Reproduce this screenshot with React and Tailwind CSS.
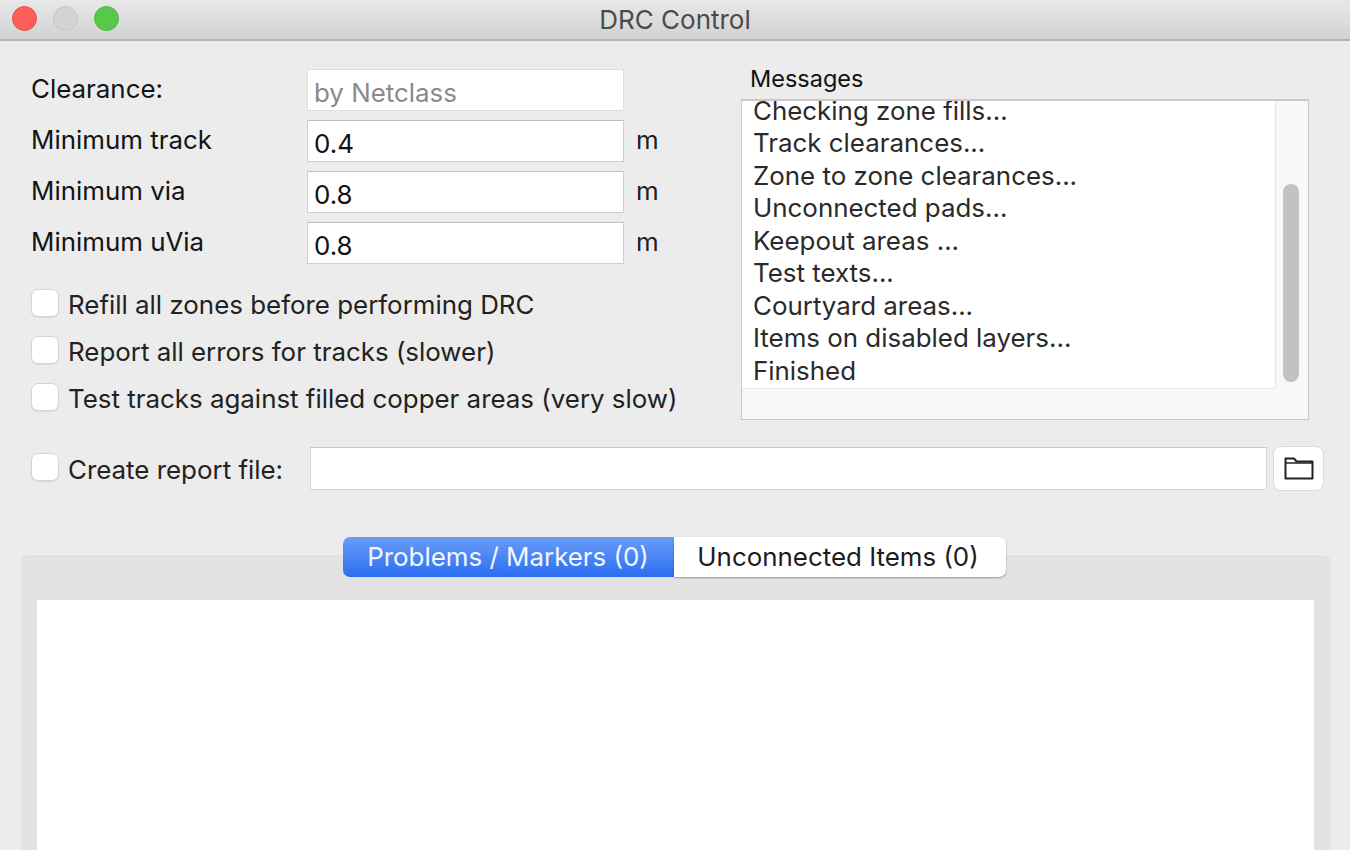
const font = { fontFamily: 'Inter, "Liberation Sans", sans-serif' };

function Field({ value, muted, unit }) {
  return (
    <div className="flex items-center h-[42px]">
      <div className={`w-[317px] h-[42px] bg-white border border-[#cfcfcf] border-t-[#bdbdbd] pl-[6px] pt-[6px] flex items-center text-[25.9px] ${muted ? "text-[#8a8a8a] border-[#dedede] border-t-[#dedede]" : "text-[#111]"}`}>
        {value}
      </div>
      {unit && <span className="ml-[12px] pb-[2px] text-[25.9px] text-[#222]">m</span>}
    </div>
  );
}

function Label({ children }) {
  return <div className="h-[42px] flex items-center pb-[2px] text-[25.9px] text-[#141414]">{children}</div>;
}

function Check({ children, className = "", textClass = "pt-[2px]" }) {
  return (
    <div className={`flex items-center h-[30px] ${className}`}>
      <div className="w-[28px] h-[28px] mb-[2px] rounded-[7px] bg-white border border-[#d4d4d4] shadow-[0_1px_1px_rgba(0,0,0,0.08)] shrink-0" />
      <span className={`ml-[9px] text-[25.9px] text-[#222] whitespace-nowrap ${textClass}`}>{children}</span>
    </div>
  );
}

const messages = [
  "Checking zone fills...",
  "Track clearances...",
  "Zone to zone clearances...",
  "Unconnected pads...",
  "Keepout areas ...",
  "Test texts...",
  "Courtyard areas...",
  "Items on disabled layers...",
  "Finished",
];

export default function App() {
  return (
    <div style={font} className="w-[1350px] h-[850px] overflow-hidden bg-[#ececec] flex flex-col">
      <header className="relative h-[41px] shrink-0 flex items-center justify-center bg-gradient-to-b from-[#e8e8e8] to-[#d2d2d2] border-b-2 border-[#b4b4b4]">
        <div className="absolute left-[12px] top-[6px] flex gap-[16px]">
          <div className="w-[25px] h-[25px] rounded-full bg-[#fc5f57] border border-[#e2504a]" />
          <div className="w-[25px] h-[25px] rounded-full bg-[#d3d3d3] border border-[#c6c6c6]" />
          <div className="w-[25px] h-[25px] rounded-full bg-[#57c84a] border border-[#4cb941]" />
        </div>
        <span className="text-[26px] text-[#4a4a4a]">DRC Control</span>
      </header>

      <div className="flex pl-[31px] pt-[28px] h-[368px] shrink-0">
        <div className="w-[710px] shrink-0">
          <div className="flex">
            <div className="w-[276px] flex flex-col gap-[9px]">
              <Label>Clearance:</Label>
              <Label>Minimum track</Label>
              <Label>Minimum via</Label>
              <Label>Minimum uVia</Label>
            </div>
            <div className="flex flex-col gap-[9px]">
              <Field value="by Netclass" muted />
              <Field value="0.4" unit />
              <Field value="0.8" unit />
              <Field value="0.8" unit />
            </div>
          </div>
          <div className="mt-[25px] flex flex-col gap-[17px]">
            <Check>Refill all zones before performing DRC</Check>
            <Check>Report all errors for tracks (slower)</Check>
            <Check>Test tracks against filled copper areas (very slow)</Check>
          </div>
        </div>
        <div className="-mt-[4px]">
          <div className="ml-[9px] h-[28px] flex items-center text-[23.5px] text-[#111]">Messages</div>
          <div className="mt-[6px] w-[568px] h-[321px] bg-[#f8f8f8] border border-[#c9c9c9] border-t-2 flex">
            <div className="w-[534px] h-[288px] bg-white border-r border-b border-[#e6e6e6] overflow-hidden pl-[11px] shrink-0">
              <div className="-mt-[6px]">
                {messages.map((m) => (
                  <div key={m} className="h-[32.5px] flex items-center text-[25.9px] text-[#2a2a2a] whitespace-nowrap">{m}</div>
                ))}
              </div>
            </div>
            <div className="ml-[7px] mt-[83px] w-[16px] h-[198px] rounded-full bg-[#c2c2c2]" />
          </div>
        </div>
      </div>

      <div className="flex items-center pl-[31px] h-[46px] mt-[36px] shrink-0">
        <Check className="w-[279px]" textClass="pt-[4px]">Create report file:</Check>
        <div className="w-[957px] h-[43px] bg-white border border-[#d6d6d6] border-t-[#c8c8c8]" />
        <div className="ml-[6px] w-[51px] h-[45px] rounded-[8px] bg-white border border-[#dcdcdc] flex items-center justify-center">
          <svg width="30" height="24" viewBox="0 0 30 24" fill="none" stroke="#222" strokeWidth="2" strokeLinejoin="round">
            <path d="M1.5 22.5V2.5h8.5l2.5 3h16v17z" />
            <path d="M1.5 7h27" strokeWidth="1.5" />
          </svg>
        </div>
      </div>

      <div className="ml-[21px] mt-[63px] w-[1309px] grow bg-[#e2e2e2] border-t border-[#efefef] rounded-t-[6px] px-[16px]">
        <div className="flex justify-center -mt-[18px] text-[25.9px] h-[40px] pr-[3px]">
          <div className="w-[331px] h-[40px] rounded-l-[7px] bg-gradient-to-b from-[#6a9cf8] to-[#2a6df0] text-[#f2f6ff] flex items-center justify-center whitespace-nowrap">Problems / Markers (0)</div>
          <div className="w-[332px] h-[40px] pr-[3px] rounded-r-[7px] bg-white text-[#1c1c1c] shadow-[0_1px_2px_rgba(0,0,0,0.35)] flex items-center justify-center whitespace-nowrap">Unconnected Items (0)</div>
        </div>
        <div className="mt-[23px] h-[300px] bg-white" />
      </div>
    </div>
  );
}
